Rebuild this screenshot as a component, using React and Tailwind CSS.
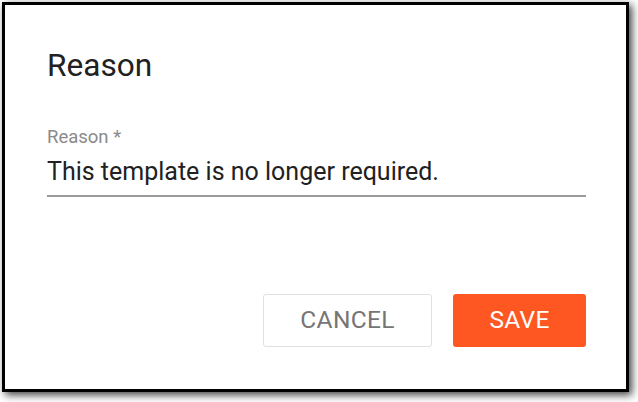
export default function App() {
  return (
    <div className="w-[638px] h-[402px] bg-white p-[2px] font-['Roboto',sans-serif]">
      <div className="w-[627px] h-[390px] border-[3px] border-black bg-white shadow-[3px_3px_8px_rgba(0,0,0,0.75)] pl-[42px] pr-[40px] pt-[43px] flex flex-col">
        <h2 className="text-[31.6px] leading-[36px] text-[#212121] font-normal">Reason</h2>
        <div className="mt-[42px]">
          <label className="block text-[18.5px] leading-[22px] text-[#8a8a8a]">Reason *</label>
          <div className="mt-[9px] border-b-2 border-[#9a9a9a] pb-[8px]">
            <div className="text-[25px] leading-[30px] text-[#212121]">
              This template is no longer required.
            </div>
          </div>
        </div>
        <div className="mt-[97px] flex justify-end gap-[21px]">
          <button className="w-[169px] h-[53px] rounded-[3px] border border-[#e0e0e0] text-[24.5px] text-[#757575] tracking-[0.3px]">
            CANCEL
          </button>
          <button className="w-[133px] h-[53px] rounded-[3px] bg-[#ff5722] text-[24.5px] text-white tracking-[0.3px]">
            SAVE
          </button>
        </div>
      </div>
    </div>
  )
}
